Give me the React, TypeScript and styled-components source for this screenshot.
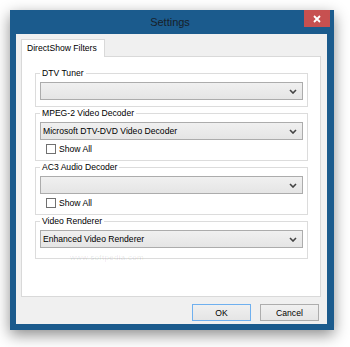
import React from 'react';
import styled, { createGlobalStyle } from 'styled-components';

const Global = createGlobalStyle`
  html, body { margin: 0; padding: 0; background: #ffffff; }
  body { font-family: "Liberation Sans", Arial, sans-serif; }
  * { box-sizing: border-box; }
`;

const Stage = styled.div`
  width: 350px;
  height: 347px;
  padding: 10px 0 0 10px;
  overflow: hidden;
`;

const Window = styled.div`
  width: 324px;
  height: 320px;
  background: #1b5b8d;
  display: flex;
  flex-direction: column;
  box-shadow: 0 5px 14px rgba(0, 0, 0, 0.45);
`;

const TitleBar = styled.div`
  height: 24px;
  display: grid;
  grid-template-columns: 1fr auto 1fr;
  align-items: center;
  padding-right: 4px;
`;

const Title = styled.div`
  grid-column: 2;
  font-size: 11px;
  color: #17202a;
  line-height: 24px;
`;

const CloseButton = styled.div`
  grid-column: 3;
  justify-self: end;
  align-self: start;
  width: 26px;
  height: 17px;
  background: #c75050;
  display: flex;
  align-items: center;
  justify-content: center;
`;

const Body = styled.div`
  flex: 1;
  margin: 0 7px 6px 6px;
  background: #f0f0f0;
  padding: 5px 6px 0 5px;
  display: flex;
  flex-direction: column;
`;

const TabStrip = styled.div`
  display: flex;
  height: 17px;
  position: relative;
  z-index: 1;
`;

const Tab = styled.div`
  background: #ffffff;
  border: 1px solid #d9d9d9;
  border-bottom: none;
  height: 18px;
  padding: 0 7px 0 5px;
  font-size: 8.6px;
  line-height: 16px;
  color: #000;
`;

const Panel = styled.div`
  height: 241px;
  background: #ffffff;
  border: 1px solid #d9d9d9;
  padding: 10px 12px 0 13px;
  display: flex;
  flex-direction: column;
`;

const Group = styled.fieldset<{ $padBottom?: number }>`
  margin: 0;
  min-width: 0;
  border: 1px solid #dcdcdc;
  padding: 3px 4px ${(p) => p.$padBottom ?? 6}px 4px;
  display: flex;
  flex-direction: column;
`;

const Legend = styled.legend`
  padding: 0 2px;
  font-size: 8.6px;
  line-height: 12px;
  color: #000;
`;

const Combo = styled.div`
  height: 18px;
  border: 1px solid #acacac;
  background: linear-gradient(#f0f0f0, #e5e5e5);
  display: flex;
  align-items: center;
  justify-content: space-between;
  padding: 0 5px 0 2px;
  font-size: 8.6px;
  color: #000;
`;

const CheckRow = styled.div`
  display: flex;
  align-items: center;
  gap: 3px;
  margin: 4px 0 0 6px;
  font-size: 8.6px;
  line-height: 10px;
  color: #000;
`;

const CheckBox = styled.span`
  width: 10px;
  height: 10px;
  border: 1px solid #707070;
  background: #ffffff;
`;

const Watermark = styled.div`
  margin: -6px 0 0 35px;
  font-size: 8px;
  line-height: 10px;
  color: rgba(0, 0, 0, 0.1);
  letter-spacing: 0.3px;
`;

const ButtonRow = styled.div`
  display: flex;
  justify-content: flex-end;
  gap: 9px;
  margin: 7px 2px 0 0;
`;

const Button = styled.div<{ $default?: boolean }>`
  width: 59px;
  height: 17px;
  border: 1px solid ${(p) => (p.$default ? '#6fb0ef' : '#adadad')};
  background: linear-gradient(#f0f0f0, #e5e5e5);
  display: flex;
  align-items: center;
  justify-content: center;
  font-size: 8.6px;
  color: #000;
`;

const Chevron = () => (
  <svg width="8" height="5" viewBox="0 0 8 5">
    <polyline points="1,1 4,4 7,1" fill="none" stroke="#444" strokeWidth="1.6" />
  </svg>
);

const CloseIcon = () => (
  <svg width="8" height="8" viewBox="0 0 8 8">
    <path d="M1 1 L7 7 M7 1 L1 7" stroke="#fff" strokeWidth="1.8" />
  </svg>
);

const Select = ({ value }: { value?: string }) => (
  <Combo>
    <span>{value ?? ''}</span>
    <Chevron />
  </Combo>
);

const ShowAll = () => (
  <CheckRow>
    <CheckBox />
    <span>Show All</span>
  </CheckRow>
);

export default function App() {
  return (
    <>
      <Global />
      <Stage>
        <Window>
          <TitleBar>
            <Title>Settings</Title>
            <CloseButton>
              <CloseIcon />
            </CloseButton>
          </TitleBar>
          <Body>
            <TabStrip>
              <Tab>DirectShow Filters</Tab>
            </TabStrip>
            <Panel>
              <Group>
                <Legend>DTV Tuner</Legend>
                <Select />
              </Group>
              <Group>
                <Legend>MPEG-2 Video Decoder</Legend>
                <Select value="Microsoft DTV-DVD Video Decoder" />
                <ShowAll />
              </Group>
              <Group>
                <Legend>AC3 Audio Decoder</Legend>
                <Select />
                <ShowAll />
              </Group>
              <Group $padBottom={10}>
                <Legend>Video Renderer</Legend>
                <Select value="Enhanced Video Renderer" />
              </Group>
              <Watermark>www.softpedia.com</Watermark>
            </Panel>
            <ButtonRow>
              <Button $default>OK</Button>
              <Button>Cancel</Button>
            </ButtonRow>
          </Body>
        </Window>
      </Stage>
    </>
  );
}
